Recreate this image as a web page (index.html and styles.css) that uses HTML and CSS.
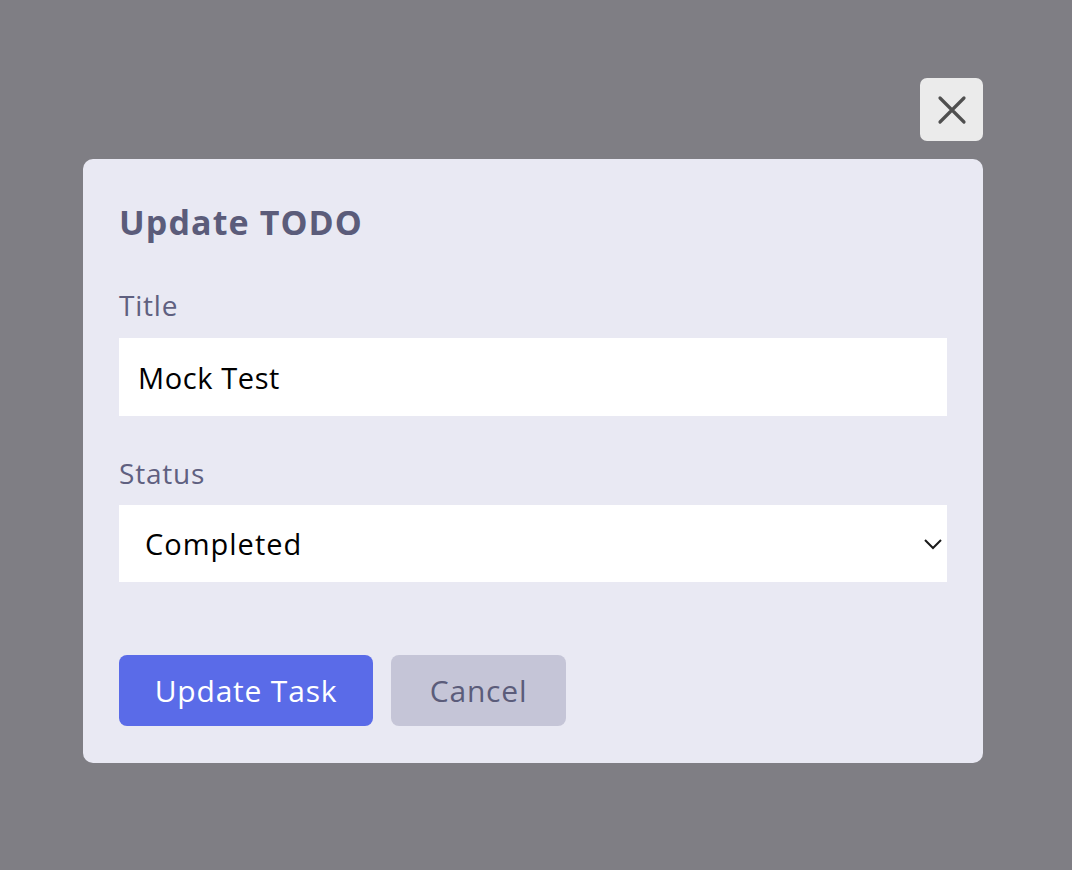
FILE: index.html
```html
<!DOCTYPE html>
<html lang="en">
<head>
<meta charset="utf-8">
<title>Update TODO</title>
<link rel="stylesheet" href="styles.css">
</head>
<body>
<div class="overlay">
  <div class="dialog-wrap">
    <button class="close-btn" aria-label="Close">
      <svg width="30" height="30" viewBox="0 0 30 30"><path d="M3 3 L27 27 M27 3 L3 27" stroke="#4f4f4f" stroke-width="3.2" stroke-linecap="round" fill="none"/></svg>
    </button>
    <div class="modal">
      <h2 class="modal-title">Update TODO</h2>
      <label class="field-label">Title</label>
      <div class="text-input">Mock Test</div>
      <label class="field-label status-label">Status</label>
      <div class="select-input">
        <span>Completed</span>
        <svg width="20" height="12" viewBox="0 0 20 12"><path d="M2 2 L10 10 L18 2" stroke="#1a1a1a" stroke-width="2" fill="none"/></svg>
      </div>
      <div class="actions">
        <button class="btn btn-primary">Update Task</button>
        <button class="btn btn-secondary">Cancel</button>
      </div>
    </div>
  </div>
</div>
</body>
</html>
```

FILE: styles.css
```css
html, body {
  margin: 0;
  padding: 0;
}
body {
  background: #7f7e84;
  font-family: "Open Sans", "Noto Sans", sans-serif;
  height: 870px;
  overflow: hidden;
}
.overlay {
  display: flex;
  padding-top: 78px;
  padding-left: 83px;
}
.dialog-wrap {
  width: 900px;
  display: flex;
  flex-direction: column;
  align-items: flex-end;
  gap: 18px;
}
.close-btn {
  width: 63px;
  height: 63px;
  border: none;
  border-radius: 7px;
  background: #ebebeb;
  display: flex;
  align-items: center;
  justify-content: center;
  padding: 0;
}
.modal {
  align-self: stretch;
  background: #e9e9f3;
  border-radius: 10px;
  padding: 39px 36px 37px;
  display: flex;
  flex-direction: column;
}
.modal-title {
  margin: 0;
  font-size: 34px;
  line-height: 48px;
  font-weight: 700;
  letter-spacing: 1.1px;
  color: #5b5c7a;
}
.field-label {
  display: block;
  margin-top: 39px;
  font-size: 28px;
  line-height: 40px;
  letter-spacing: 0.8px;
  color: #5f6080;
}
.status-label {
  margin-top: 37px;
}
.text-input {
  margin-top: 13px;
  height: 78px;
  background: #fff;
  display: flex;
  align-items: center;
  padding-left: 19px;
  font-size: 29px;
  letter-spacing: 0.6px;
  color: #000;
}
.select-input {
  margin-top: 12px;
  height: 77px;
  background: #fff;
  display: flex;
  align-items: center;
  justify-content: space-between;
  padding: 0 4px 0 26px;
  font-size: 29px;
  letter-spacing: 1px;
  color: #000;
}
.actions {
  margin-top: 73px;
  display: flex;
  gap: 18px;
}
.btn {
  height: 71px;
  border: none;
  border-radius: 8px;
  font-family: inherit;
  font-size: 30px;
  letter-spacing: 0.8px;
  padding: 0;
}
.btn-primary {
  width: 254px;
  background: #5a6be8;
  color: #fff;
}
.btn-secondary {
  width: 175px;
  background: #c5c5d7;
  color: #5b5c7a;
}
```
